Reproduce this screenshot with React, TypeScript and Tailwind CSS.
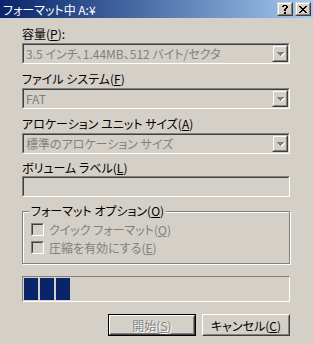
import React from 'react';

const FACE = 'bg-[#d4d0c8]';

function Raised({ children, className = '' }: { children?: React.ReactNode; className?: string }) {
  return (
    <div className={`border border-t-white border-l-white border-b-[#404040] border-r-[#404040] ${className}`}>
      <div className="flex h-full w-full items-center justify-center border border-t-[#d4d0c8] border-l-[#d4d0c8] border-b-[#808080] border-r-[#808080]">
        {children}
      </div>
    </div>
  );
}

function Sunken({ children, className = '' }: { children?: React.ReactNode; className?: string }) {
  return (
    <div className={`border border-t-[#808080] border-l-[#808080] border-b-white border-r-white ${className}`}>
      <div className="flex h-full w-full items-center border border-t-[#404040] border-l-[#404040] border-b-[#d4d0c8] border-r-[#d4d0c8] bg-[#d4d0c8]">
        {children}
      </div>
    </div>
  );
}

function Arrow() {
  return (
    <svg width="8" height="5" viewBox="0 0 8 5" shapeRendering="crispEdges">
      <g fill="#ffffff">
        <rect x="1" y="1" width="7" height="1" />
        <rect x="2" y="2" width="5" height="1" />
        <rect x="3" y="3" width="3" height="1" />
        <rect x="4" y="4" width="1" height="1" />
      </g>
      <g fill="#808080">
        <rect x="0" y="0" width="7" height="1" />
        <rect x="1" y="1" width="5" height="1" />
        <rect x="2" y="2" width="3" height="1" />
        <rect x="3" y="3" width="1" height="1" />
      </g>
    </svg>
  );
}

function Combo({ value }: { value: string }) {
  return (
    <Sunken className="h-[21px] w-full">
      <div className="flex-1 whitespace-nowrap pl-[2px] text-[#808080]">{value}</div>
      <div className="h-full w-[16px] border border-t-[#d4d0c8] border-l-[#d4d0c8] border-b-[#404040] border-r-[#404040]">
        <div className="flex h-full w-full items-center justify-center border border-t-white border-l-white border-b-[#808080] border-r-[#808080] pl-[1px] pt-[1px]">
          <Arrow />
        </div>
      </div>
    </Sunken>
  );
}

function Label({ text, mn, suffix = '' }: { text: string; mn: string; suffix?: string }) {
  return (
    <div className="h-[13px] whitespace-nowrap">
      {text}(<u className="underline-offset-1">{mn}</u>){suffix}
    </div>
  );
}

function Check({ text, mn }: { text: string; mn: string }) {
  return (
    <div className="flex h-[13px] items-center gap-[5px]">
      <div className="h-[13px] w-[13px] border border-t-[#808080] border-l-[#808080] border-b-white border-r-white">
        <div className="h-full w-full border border-t-[#404040] border-l-[#404040] border-b-[#d4d0c8] border-r-[#d4d0c8] bg-[#d4d0c8]" />
      </div>
      <div className="whitespace-nowrap text-[#808080]">
        {text}(<u>{mn}</u>)
      </div>
    </div>
  );
}

function CaptionButton({ kind }: { kind: 'help' | 'close' }) {
  return (
    <div className="h-[14px] w-[16px] border border-t-[#d4d0c8] border-l-[#d4d0c8] border-b-[#404040] border-r-[#404040] bg-[#d4d0c8]">
      <div className="flex h-full w-full items-center justify-center border border-t-white border-l-white border-b-[#808080] border-r-[#808080]">
        {kind === 'help' ? (
          <svg width="6" height="9" viewBox="0 0 6 9" shapeRendering="crispEdges" fill="#000">
            <rect x="1" y="0" width="4" height="1" />
            <rect x="0" y="1" width="2" height="1" />
            <rect x="4" y="1" width="2" height="2" />
            <rect x="3" y="3" width="2" height="1" />
            <rect x="2" y="4" width="2" height="2" />
            <rect x="2" y="7" width="2" height="2" />
          </svg>
        ) : (
          <svg width="8" height="7" viewBox="0 0 8 7" shapeRendering="crispEdges" fill="#000">
            <rect x="0" y="0" width="2" height="1" />
            <rect x="6" y="0" width="2" height="1" />
            <rect x="1" y="1" width="2" height="1" />
            <rect x="5" y="1" width="2" height="1" />
            <rect x="2" y="2" width="4" height="1" />
            <rect x="3" y="3" width="2" height="1" />
            <rect x="2" y="4" width="4" height="1" />
            <rect x="1" y="5" width="2" height="1" />
            <rect x="5" y="5" width="2" height="1" />
            <rect x="0" y="6" width="2" height="1" />
            <rect x="6" y="6" width="2" height="1" />
          </svg>
        )}
      </div>
    </div>
  );
}

export default function App() {
  return (
    <div
      className={`h-[344px] w-[313px] overflow-hidden ${FACE} font-['Noto_Sans_CJK_JP',sans-serif] text-[12px] leading-[13px] text-black [font-feature-settings:'palt']`}
    >
      {/* title bar */}
      <div className="flex h-[18px] items-center bg-gradient-to-r from-[#0a246a] to-[#a6caf0] pl-[3px] pr-[2px]">
        <div className="flex-1 whitespace-nowrap text-white">フォーマット中 A:¥</div>
        <div className="flex gap-[2px]">
          <CaptionButton kind="help" />
          <CaptionButton kind="close" />
        </div>
      </div>

      <div className="flex flex-col pl-[22px] pr-[23px] pt-[9px]">
        <Label text="容量" mn="P" suffix=":" />
        <div className="mt-[3px]">
          <Combo value="3.5 インチ、1.44MB、512 バイト/セクタ" />
        </div>

        <div className="mt-[8px]">
          <Label text="ファイル システム" mn="F" />
        </div>
        <div className="mt-[3px]">
          <Combo value="FAT" />
        </div>

        <div className="mt-[8px]">
          <Label text="アロケーション ユニット サイズ" mn="A" />
        </div>
        <div className="mt-[3px]">
          <Combo value="標準のアロケーション サイズ" />
        </div>

        <div className="mt-[7px]">
          <Label text="ボリューム ラベル" mn="L" />
        </div>
        <div className="mt-[2px]">
          <Sunken className="h-[21px] w-full" />
        </div>

        {/* format options group */}
        <div className="relative mt-[14px] h-[53px] border border-[#808080] shadow-[inset_1px_1px_0_#fff,1px_1px_0_#fff]">
          <div className={`absolute left-[6px] top-[-8px] ${FACE} px-[2px] whitespace-nowrap`}>
            フォーマット オプション(<u>O</u>)
          </div>
          <div className="flex flex-col gap-[5px] pl-[8px] pt-[11px]">
            <Check text="クイック フォーマット" mn="Q" />
            <Check text="圧縮を有効にする" mn="E" />
          </div>
        </div>

        {/* progress */}
        <div className="mt-[12px] h-[26px] w-full border border-t-[#808080] border-l-[#808080] border-b-white border-r-white p-[1px]">
          <div className="flex h-full gap-[2px]">
            <div className="h-full w-[14px] bg-[#0a246a]" />
            <div className="h-full w-[14px] bg-[#0a246a]" />
            <div className="h-full w-[14px] bg-[#0a246a]" />
          </div>
        </div>

        {/* buttons */}
        <div className="mt-[12px] flex justify-end gap-[6px]">
          <div className="h-[22px] w-[88px] border border-black">
            <Raised className="h-full w-full">
              <span className="whitespace-nowrap text-[#808080] [text-shadow:1px_1px_0_#fff]">
                開始(<u>S</u>)
              </span>
            </Raised>
          </div>
          <Raised className="h-[22px] w-[88px]">
            <span className="whitespace-nowrap">
              キャンセル(<u>C</u>)
            </span>
          </Raised>
        </div>
      </div>
    </div>
  );
}
